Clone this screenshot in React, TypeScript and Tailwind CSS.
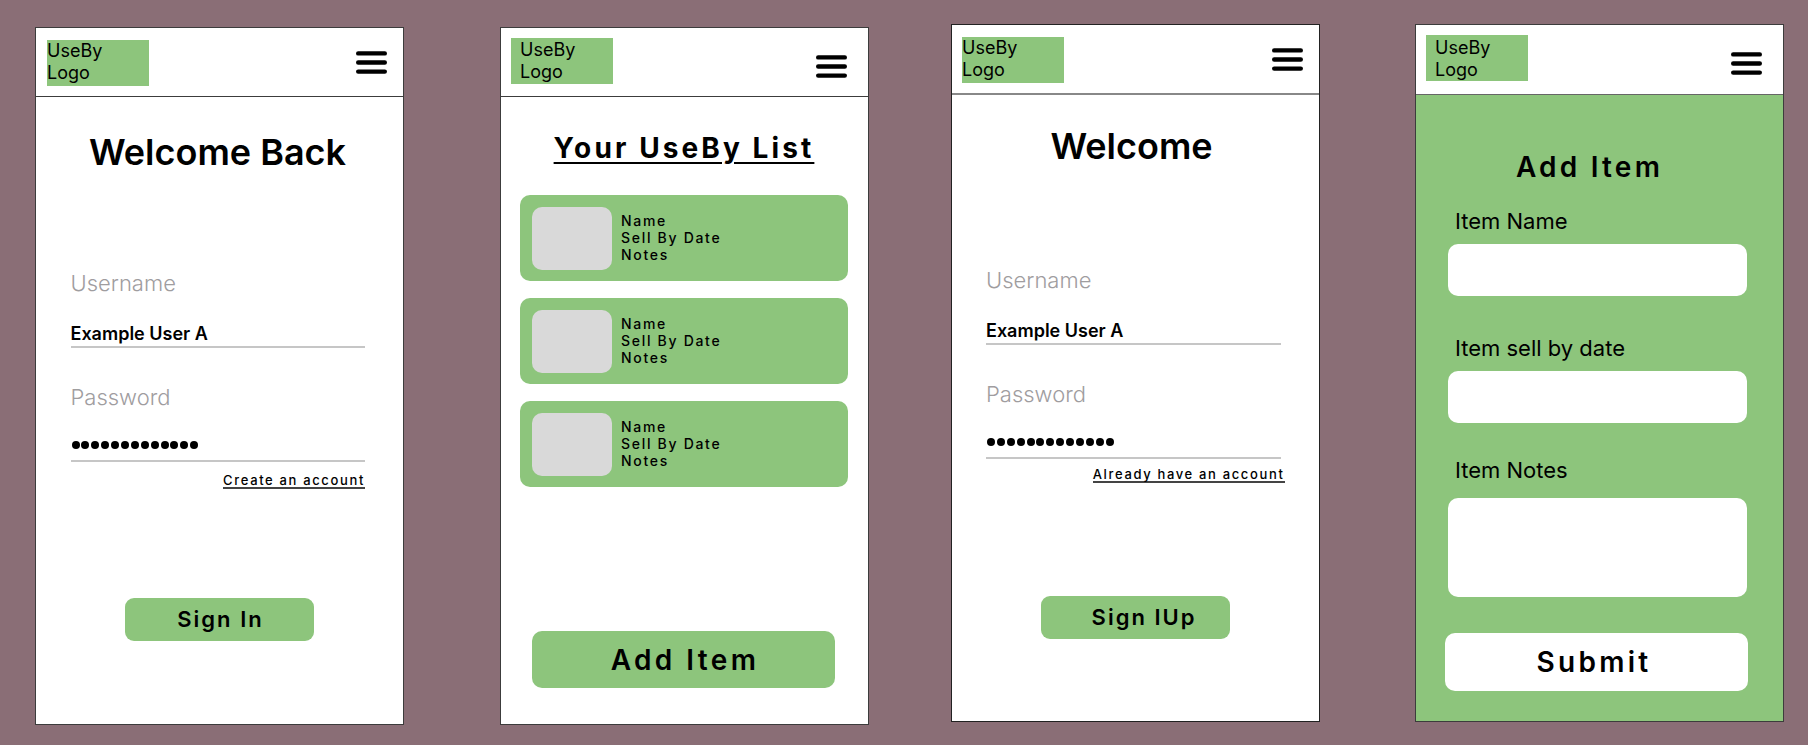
const items = [1, 2, 3];

function Burger({ className }: { className: string }) {
  return (
    <svg className={className} width="31" height="23" viewBox="0 0 31 23" fill="none">
      <path d="M2.2 2.4H28.8M2.2 11.5H28.8M2.2 20.6H28.8" stroke="#000" strokeWidth="4.4" strokeLinecap="round" />
    </svg>
  );
}

function Header({ logo, burger, height }: { logo: string; burger: string; height: string }) {
  return (
    <header className={`flex shrink-0 items-start justify-between bg-white ${height}`}>
      <div className={`h-[46px] w-[102px] bg-[#8dc57c] text-[18px] leading-[22px] font-normal text-black ${logo}`}>
        UseBy
        <br />
        Logo
      </div>
      <Burger className={burger} />
    </header>
  );
}

type AuthProps = {
  title: string;
  titleClass: string;
  formClass: string;
  link: string;
  linkClass: string;
  button: string;
  buttonClass: string;
};

function AuthBody({ title, titleClass, formClass, link, linkClass, button, buttonClass }: AuthProps) {
  return (
    <div className="flex flex-1 flex-col bg-white">
      <h1 className={`text-center text-[36px] leading-[44px] font-semibold text-black ${titleClass}`}>{title}</h1>
      <div className={`w-[294.5px] ${formClass}`}>
        <p className="text-[22px] leading-[24px] font-light text-[#9f9d9f]">Username</p>
        <div className="mt-[28px] border-b-2 border-[#c6c6c6] pb-[1px] text-[18px] leading-[22px] font-semibold text-black">
          Example User A
        </div>
        <p className="mt-[37px] text-[22px] leading-[24px] font-light text-[#9f9d9f]">Password</p>
        <div className="mt-[13px] flex h-[40px] items-center gap-[1.9px] border-b-2 border-[#c6c6c6] pt-[8px] pl-[1px]">
          {Array.from({ length: 13 }).map((_, i) => (
            <span key={i} className="h-[8px] w-[8px] rounded-full bg-black" />
          ))}
        </div>
        <div className={`flex justify-end ${linkClass}`}>
          <a className="border-b-2 border-[#444] text-[13px] leading-[14px] font-medium tracking-[1.65px] whitespace-nowrap text-black">
            {link}
          </a>
        </div>
      </div>
      <button className={`mx-auto h-[43px] w-[189px] rounded-[9px] bg-[#8dc57c] text-[22px] font-semibold tracking-[2px] text-black ${buttonClass}`}>
        {button}
      </button>
    </div>
  );
}

function ListBody() {
  return (
    <div className="flex flex-1 flex-col bg-white pt-[34px]">
      <h2 className="pr-[1px] text-center text-[28px] leading-[34px] font-bold tracking-[3.1px] text-black underline underline-offset-[4px]">
        Your UseBy List
      </h2>
      <div className="mt-[30px] ml-[19px] flex w-[328px] flex-col gap-[17px]">
        {items.map((n) => (
          <div key={n} className="flex h-[86px] items-center rounded-[10px] bg-[#8dc57c] pl-[12px]">
            <div className="h-[63px] w-[80px] rounded-[10px] bg-[#d9d9d9]" />
            <div className="ml-[9px] pb-[2px] text-[14px] leading-[17px] font-medium tracking-[1.7px] text-black">
              <p>Name</p>
              <p>Sell By Date</p>
              <p>Notes</p>
            </div>
          </div>
        ))}
      </div>
      <button className="mt-[144px] ml-[31px] h-[57px] w-[303px] rounded-[10px] bg-[#8dc57c] pl-[3px] text-[28px] font-semibold tracking-[3.4px] text-black">
        Add Item
      </button>
    </div>
  );
}

function FormBody() {
  return (
    <div className="flex flex-1 flex-col bg-[#8dc57c] pt-[55px]">
      <h2 className="pr-[20px] text-center text-[28px] leading-[34px] font-semibold tracking-[3.2px] text-black">Add Item</h2>
      <label className="mt-[25px] ml-[39px] text-[22px] leading-[24px] font-normal text-black">Item Name</label>
      <input className="mt-[11px] ml-[32px] h-[52px] w-[299px] rounded-[10px] bg-white" />
      <label className="mt-[40px] ml-[39px] text-[22px] leading-[24px] font-normal text-black">Item sell by date</label>
      <input className="mt-[11px] ml-[32px] h-[52px] w-[299px] rounded-[10px] bg-white" />
      <label className="mt-[35px] ml-[39px] text-[22px] leading-[24px] font-normal text-black">Item Notes</label>
      <textarea className="mt-[16px] ml-[32px] block h-[99px] w-[299px] resize-none rounded-[10px] bg-white" />
      <button className="mt-[36px] ml-[29px] h-[58px] w-[303px] rounded-[10px] bg-white pr-[5px] text-[28px] font-semibold tracking-[3.3px] text-black">
        Submit
      </button>
    </div>
  );
}

export default function App() {
  return (
    <div className="flex h-[745px] w-[1808px] items-start overflow-hidden bg-[#8a6e76] font-[Inter,sans-serif]">
      <section className="mt-[27px] ml-[35px] flex h-[698px] w-[369px] flex-col border border-[#3c3c3c]">
        <Header height="h-[69px] border-b border-[#3c3c3c]" logo="mt-[12px] ml-[11px]" burger="mt-[23px] mr-[16px]" />
        <AuthBody
          title="Welcome Back"
          titleClass="pt-[33px] pr-[4px]"
          formClass="mt-[97px] ml-[34.5px]"
          link="Create an account"
          linkClass="mt-[11px]"
          button="Sign In"
          buttonClass="mt-[109px] pl-[2px]"
        />
      </section>

      <section className="mt-[27px] ml-[96px] flex h-[698px] w-[369px] flex-col border border-[#3c3c3c]">
        <Header height="h-[69px] border-b border-[#3c3c3c]" logo="mt-[10px] ml-[10px] pt-[1px] pl-[9px]" burger="mt-[27px] mr-[21px]" />
        <ListBody />
      </section>

      <section className="mt-[24px] ml-[82px] flex h-[698px] w-[369px] flex-col border border-[#222]">
        <Header height="h-[70px] border-b-2 border-[#888]" logo="mt-[12px] ml-[10px]" burger="mt-[23px] mr-[16px]" />
        <AuthBody
          title="Welcome"
          titleClass="pt-[29px] pr-[8px]"
          formClass="mt-[100px] ml-[34px]"
          link="Already have an account"
          linkClass="-mr-[4px] mt-[8px]"
          button="Sign IUp"
          buttonClass="mt-[113px] pl-[17px]"
        />
      </section>

      <section className="mt-[24px] ml-[95px] flex h-[698px] w-[369px] flex-col border border-[#3c3c3c]">
        <Header height="h-[70px] border-b border-[#666]" logo="mt-[10px] ml-[10px] pt-[2px] pl-[9px]" burger="mt-[27px] mr-[21px]" />
        <FormBody />
      </section>
    </div>
  );
}
